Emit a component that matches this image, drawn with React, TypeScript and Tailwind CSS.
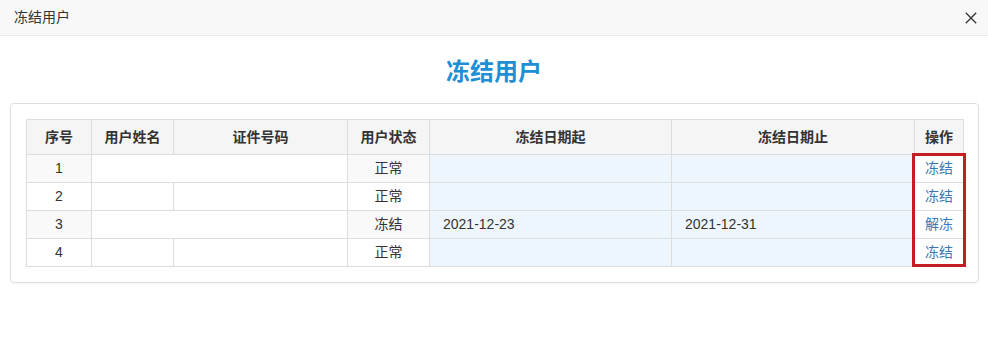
import React from "react";

const rows = [
  { no: "1", status: "正常", start: "", end: "", op: "冻结", striped: true },
  { no: "2", status: "正常", start: "", end: "", op: "冻结", striped: false },
  { no: "3", status: "冻结", start: "2021-12-23", end: "2021-12-31", op: "解冻", striped: true },
  { no: "4", status: "正常", start: "", end: "", op: "冻结", striped: false },
];

export default function App() {
  return (
    <div
      className="w-[988px] h-[344px] bg-white text-[#333] overflow-hidden"
      style={{ fontFamily: '"Liberation Sans", "Noto Sans CJK SC", sans-serif' }}
    >
      <div className="h-[36px] bg-[#f8f8f8] border-b border-[#eaeaea] flex items-center justify-between pl-[14px] pr-[11px]">
        <span className="text-[14px] text-[#333]">冻结用户</span>
        <svg width="12" height="12" viewBox="0 0 12 12" className="block">
          <path d="M0.8 0.8 L11.2 11.2 M11.2 0.8 L0.8 11.2" stroke="#333" strokeWidth="1.3" />
        </svg>
      </div>
      <div className="pt-[20px] pb-[15px] text-center">
        <div className="text-[24px] leading-[32px] font-bold text-[#1e8fd4]">冻结用户</div>
      </div>
      <div className="ml-[10px] w-[969px] border border-[#dedede] rounded-[4px] p-[15px] shadow-[0_1px_1px_rgba(0,0,0,0.04)]">
        <div className="relative">
          <table className="w-[937px] table-fixed border-collapse text-[14px]">
            <colgroup>
              <col className="w-[65px]" />
              <col className="w-[82px]" />
              <col className="w-[174px]" />
              <col className="w-[82px]" />
              <col className="w-[242px]" />
              <col className="w-[243px]" />
              <col className="w-[49px]" />
            </colgroup>
            <thead>
              <tr className="h-[35px] bg-[#f5f5f5]">
                {["序号", "用户姓名", "证件号码", "用户状态", "冻结日期起", "冻结日期止", "操作"].map((h) => (
                  <th key={h} className="border border-[#dddddd] font-bold text-center text-[#333] p-0">
                    {h}
                  </th>
                ))}
              </tr>
            </thead>
            <tbody>
              {rows.map((r) => {
                const bg = r.striped ? "bg-[#f9f9f9]" : "bg-white";
                return (
                  <tr key={r.no} className="h-[28px]">
                    <td className={`border border-[#dddddd] text-center p-0 ${bg}`}>{r.no}</td>
                    <td
                      className={
                        r.striped
                          ? "border border-[#dddddd] border-r-white bg-white p-0"
                          : "border border-[#dddddd] bg-white p-0"
                      }
                    ></td>
                    <td className="border border-[#dddddd] bg-white p-0"></td>
                    <td className={`border border-[#dddddd] text-center p-0 ${bg}`}>{r.status}</td>
                    <td className="border border-[#dddddd] bg-[#eef6fd] pl-[13px] p-0">{r.start}</td>
                    <td className="border border-[#dddddd] bg-[#eef6fd] pl-[13px] p-0">{r.end}</td>
                    <td className="border border-[#dddddd] bg-white text-center text-[#3b78b4] p-0">{r.op}</td>
                  </tr>
                );
              })}
            </tbody>
          </table>
          {/* red highlight box drawn over the operation column */}
          <div className="absolute left-[886px] top-[34px] w-[54px] h-[114px] border-[3px] border-[#c41e24]" />
        </div>
      </div>
    </div>
  );
}
